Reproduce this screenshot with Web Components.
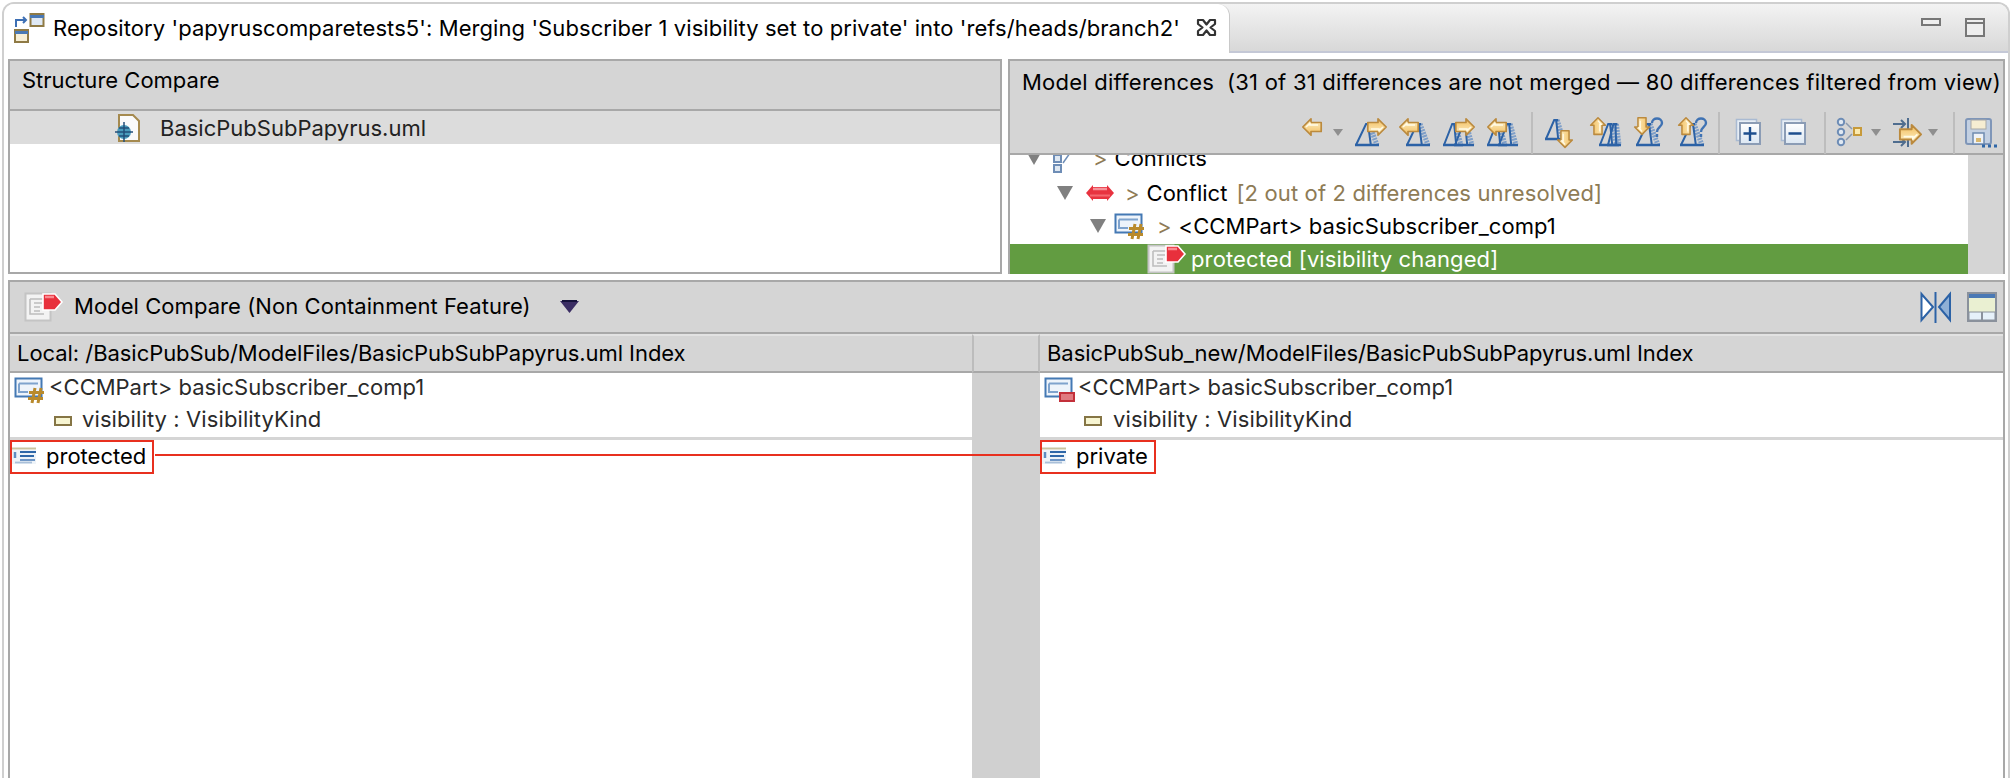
<!DOCTYPE html>
<html>
<head>
<meta charset="utf-8">
<title>Merge</title>
<style>
  html, body { margin: 0; background: #fff; }
  body { font-family: Inter, "Liberation Sans", sans-serif; font-size: 22px; color: #000; overflow: hidden; }
</style>
</head>
<body>
<merge-editor></merge-editor>
<script>
// gold arrow, drawn pointing left in a 20x18 box
const arrow = (x, y, rot = 0, s = 1) => `
  <g transform="translate(${x} ${y}) scale(${s}) rotate(${rot} 10 9)">
    <path d="M.8 9 9 .8V4.500H19.200V13.500H9V17.200Z" fill="url(#gold)" stroke="#bb8a3e" stroke-width="1.700" stroke-linejoin="round"/>
    <path d="M4 9 8 5.500V7H16" fill="none" stroke="#fffbe8" stroke-width="1.400"/>
  </g>`;
const tri = (x, w = 24, top = 6, bottom = 27) => {
  const apex = x + w * 0.46;
  return `
  <path d="M${apex + 3} ${top}L${x + w - 2} ${bottom}" stroke="#7f9fc8" stroke-width="5" stroke-dasharray="2 1" fill="none"/>
  <path d="M${x + 1} ${bottom}L${apex} ${top}H${apex + 4}M${apex + 2} ${top}L${x + w * 0.66} ${bottom}" stroke="#2c62a6" stroke-width="2" fill="none"/>
  <path d="M${x} ${bottom}H${x + w}" stroke="#2c62a6" stroke-width="2.500"/>`;
};
const question = (x, y) => `<path d="M${x} ${y + 5}C${x} ${y - 1} ${x + 10} ${y - 1} ${x + 10} ${y + 5}C${x + 10} ${y + 9} ${x + 5} ${y + 9} ${x + 5} ${y + 14}M${x + 5} ${y + 16}V${y + 19}" fill="none" stroke="#3f72b3" stroke-width="2.400"/>`;
const stackedPage = mark => `
  <rect x="1.500" y="1.500" width="20" height="21" fill="#e6edf5" stroke="#a9bad2" stroke-width="1.500"/>
  <rect x="5" y="5" width="20" height="21" fill="url(#page)" stroke="#8b9cb5" stroke-width="2"/>
  <path d="${mark}" stroke="#1f4f8f" stroke-width="2.400"/>`;
const windowPart = `
  <rect x="1.500" y="1.500" width="26" height="18" fill="#eef4fb" stroke="#4479b4" stroke-width="2"/>
  <path d="M5 6.500H24M5 6.500V15H14" fill="none" stroke="#7fa3cd" stroke-width="2"/>`;
const gridMark = `<path d="M21 11 18 26M27 11 24 26M15 15.500H30M14 21.500H29" stroke="#b98a2c" stroke-width="3"/>`;
const listIcon = `
  <path d="M0 1.500H24" stroke="#c9c3a0" stroke-width="2"/>
  <rect x="0" y="3" width="24" height="14" fill="#eef3f8"/>
  <path d="M3 5V11" stroke="#5f8cc0" stroke-width="2.500"/>
  <path d="M8 5H24M8 9H22" stroke="#2f67a8" stroke-width="1.800"/>
  <path d="M8 13H23" stroke="#5f8cc0" stroke-width="1.800"/>
  <path d="M3 15.500H20" stroke="#a9bfd8" stroke-width="1.800"/>`;
const redPage = `
  <rect x="1.500" y="1.500" width="25" height="27" fill="#f3f3f3" stroke="#c4c4c4" stroke-width="2"/>
  <path d="M6 7H20M6 7V22H20M10 11H18M10 15H16M10 19H16" fill="none" stroke="#bdbdbd" stroke-width="1.600"/>
  <path d="M19 2H31L38 10 31 18H19Z" fill="#e8303c" stroke="#fff" stroke-width="1.600"/>
  <path d="M21 5H30" stroke="#f98a90" stroke-width="2.500"/>`;

const ICONS = {
  back: arrow(1, 0),
  nextTheirs: tri(0) + arrow(12, 0, 180),
  prevTheirs: tri(7) + arrow(0, 0),
  nextBoth: tri(0, 20) + tri(11, 20) + arrow(12, 0, 180),
  prevBoth: tri(0, 20) + tri(11, 20) + arrow(0, 0),
  downLocal: tri(0, 20, 2, 21) + arrow(11, 13, 270, 0.9),
  upLocal: tri(10, 20) + tri(18, 14, 6, 27) + arrow(0, 0, 90, 0.9),
  downAny: tri(3, 24) + question(19, 0) + arrow(0, 0, 270, 0.9),
  upAny: tri(3, 24) + question(19, 0) + arrow(0, 0, 90, 0.9),
  expandAll: stackedPage('M15 9V23M8.500 15.500H21.500'),
  collapseAll: stackedPage('M8.500 15.500H21.500'),
  groups: `
    <g fill="#dfe8f2" stroke="#6e8db6" stroke-width="2"><circle cx="5" cy="4" r="3.200"/><circle cx="5" cy="14" r="3.200"/><circle cx="5" cy="24" r="3.200"/></g>
    <path d="M10 5 16 11M10 22 16 16" stroke="#8a9ab0" stroke-width="1.500"/>
    <rect x="18" y="10" width="7" height="7" fill="#fbeab0" stroke="#c79a3a" stroke-width="2"/>`,
  filters: `
    <path d="M0 6H12M8 2 12 6 8 10M15 0V11M0 24H12M8 20 12 24 8 28M15 18V29" fill="none" stroke="#4f6d8f" stroke-width="2"/>
    ${arrow(6, 6, 180, 1.150)}`,
  save: `
    <rect x="1" y="1" width="25" height="25" rx="2" fill="#c3d0e2" stroke="#7f96b8" stroke-width="2"/>
    <rect x="6" y="2" width="15" height="9" fill="#f6edd2" stroke="#a8a8a8"/>
    <rect x="8" y="15" width="11" height="11" fill="#eef2f7" stroke="#6f8bb0" stroke-width="1.500"/>
    <rect x="11" y="20" width="5" height="4" fill="#d8b870"/>
    <path d="M17 28H32" stroke="#2f67a8" stroke-width="3" stroke-dasharray="3 3"/>`,
  tabIcon: `
    <rect x="16.500" y="1" width="13" height="12" fill="#dfe9f5" stroke="#8f7a45" stroke-width="2"/><path d="M16 3.500H30" stroke="#4a79b5" stroke-width="3"/>
    <rect x="1" y="17" width="13" height="12" fill="#f7efd6" stroke="#8f7a45" stroke-width="2"/><path d="M1 19.500H14" stroke="#4a79b5" stroke-width="3"/>
    <path d="M2 14V7H12M9 4 12 7 9 10" fill="none" stroke="#3d6fb4" stroke-width="2"/>`,
  close: `
    <path d="M2 2H7L10.500 6.500 14 2H19V6L14.500 9.500 19 13V17H14L10.500 12.500 7 17H2V13L6.500 9.500 2 6Z" fill="#fff" stroke="#333" stroke-width="2.200" stroke-linejoin="round"/>`,
  minimize: `<rect x="1" y="1" width="18" height="6" fill="#eee" stroke="#777" stroke-width="2"/>`,
  maximize: `<rect x="1" y="1" width="18" height="17" fill="#eee" stroke="#777" stroke-width="2"/><path d="M1 5H19" stroke="#777" stroke-width="2"/>`,
  umlFile: `
    <path d="M5 1H19L25 7V27H5Z" fill="#fafafa" stroke="#a58a4f" stroke-width="2"/>
    <circle cx="10" cy="18" r="7" fill="#4a9cbd"/>
    <path d="M1 18H19M10 8V28M5 14H15M5 22H15" stroke="#234f7a" stroke-width="1.500"/>`,
  conflictsIcon: `
    <rect x="1" y="1" width="7" height="7" fill="#dfe8f2" stroke="#6e8db6" stroke-width="2"/>
    <rect x="1" y="11" width="7" height="7" fill="#dfe8f2" stroke="#6e8db6" stroke-width="2"/>
    <rect x="1" y="21" width="7" height="7" fill="#dfe8f2" stroke="#6e8db6" stroke-width="2"/>
    <path d="M10 19 17 9" stroke="#6e8db6" stroke-width="1.500"/>
    <rect x="18" y="3" width="6" height="6" fill="#fbeab0" stroke="#c79a3a" stroke-width="2"/>`,
  conflict: `
    <path d="M0 9 7 1V3H21V1L28 9 21 17V15H7V17Z" fill="#e8323f"/>
    <path d="M7 5H21" stroke="#f6939a" stroke-width="2.500"/><path d="M4 11.500H24" stroke="#f4666f" stroke-width="2"/>`,
  partConflict: windowPart + gridMark,
  partRemoved: windowPart + `<rect x="16" y="16" width="14" height="8" fill="#e07a80" stroke="#c3303a" stroke-width="2"/>`,
  attribute: `<rect x="1" y="1" width="16" height="8" fill="#f7f5d2" stroke="#857545" stroke-width="2"/>`,
  listing: listIcon,
  redPage,
  dropdown: `<path d="M0 0H10L5 7Z" fill="#8f8f8f"/>`,
  menuTri: `<path d="M0 0H19L9.500 12Z" fill="#3a2d63"/><path d="M2 0H17" stroke="#15123a" stroke-width="2"/>`,
  splitView: `
    <path d="M1.500 2 13 15 1.500 28Z" fill="#fff" stroke="#2c62a6" stroke-width="2"/>
    <path d="M30 2 19 15 30 28Z" fill="#8fb0d6" stroke="#2c62a6" stroke-width="2"/>
    <path d="M15.500 0V31" stroke="#2c62a6" stroke-width="2"/>`,
  layout: `
    <rect x="1" y="1" width="28" height="28" fill="#eaf0d2" stroke="#8a919c" stroke-width="2"/>
    <rect x="2" y="2" width="26" height="4" fill="#4a79b5"/>
    <rect x="2" y="20" width="26" height="8" fill="#e6f1fa" stroke="#8a919c"/><path d="M15 20V29" stroke="#8a919c" stroke-width="2"/>`
};

class UiIcon extends HTMLElement {
  connectedCallback() {
    const w = this.getAttribute('w') || 32;
    const h = this.getAttribute('h') || 28;
    this.attachShadow({ mode: 'open' });
    this.shadowRoot.innerHTML = `
      <style>:host { display: block; flex: none; width: ${w}px; height: ${h}px; } svg { display: block; overflow: visible; }</style>
      <svg width="${w}" height="${h}" viewBox="0 0 ${w} ${h}" fill="none">
        <defs>
          <linearGradient id="gold" x1="0" y1="0" x2="0" y2="1"><stop offset="0" stop-color="#fff4cf"/><stop offset="1" stop-color="#f2bd5c"/></linearGradient>
          <linearGradient id="page" x1="0" y1="0" x2="0" y2="1"><stop offset="0" stop-color="#ffffff"/><stop offset="1" stop-color="#dce7f3"/></linearGradient>
        </defs>
        ${ICONS[this.getAttribute('name')]}
      </svg>`;
  }
}

class EditorTab extends HTMLElement {
  connectedCallback() {
    this.attachShadow({ mode: 'open' });
    this.shadowRoot.innerHTML = `
      <style>
        :host { display: flex; height: 47px; background: linear-gradient(#f3f3f3, #d8d8d8); border-bottom: 2px solid #c4c8d6; box-sizing: content-box; }
        .tab { display: flex; align-items: center; width: 1226px; height: 49px; box-sizing: border-box; padding: 0 0 2px 10px; background: #fff; border-right: 1px solid #c9c9c9; border-top-right-radius: 12px; white-space: nowrap; }
        .tab span { margin-left: 9px; width: 1143px; letter-spacing: .08px; }
        .controls { margin-left: auto; display: flex; gap: 24px; padding: 14px 23px 0 0; }
      </style>
      <div class="tab">
        <ui-icon name="tabIcon" w="30" h="30"></ui-icon>
        <span><slot></slot></span>
        <ui-icon name="close" w="21" h="19"></ui-icon>
      </div>
      <div class="controls">
        <ui-icon name="minimize" w="20" h="8"></ui-icon>
        <ui-icon name="maximize" w="20" h="19"></ui-icon>
      </div>`;
  }
}

class StructurePane extends HTMLElement {
  connectedCallback() {
    this.attachShadow({ mode: 'open' });
    this.shadowRoot.innerHTML = `
      <style>
        :host { display: flex; flex-direction: column; width: 994px; box-sizing: border-box; border: 2px solid #a8a8a8; background: #fff; }
        .title { height: 42px; background: #d5d5d5; border-bottom: 2px solid #a8a8a8; padding: 6px 0 0 12px; }
        .row { display: flex; align-items: center; height: 33px; background: #dcdcdc; padding-left: 104px; color: #222; }
        .row ui-icon { margin-right: 20px; }
      </style>
      <div class="title"><slot name="title"></slot></div>
      <div class="row"><ui-icon name="umlFile" w="26" h="28"></ui-icon><slot></slot></div>`;
  }
}

class ToolBar extends HTMLElement {
  connectedCallback() {
    const items = [
      ['back', 29], ['drop'], ['nextTheirs'], ['prevTheirs'], ['nextBoth'], ['prevBoth'], ['sep'],
      ['downLocal'], ['upLocal'], ['downAny'], ['upAny'], ['sep', 0, -3],
      ['expandAll', 32, 3], ['collapseAll', 32, 1], ['sep'],
      ['groups', 32, -2], ['drop'], ['filters'], ['drop'], ['sep', 0, 3], ['save', 32, -2]
    ];
    this.attachShadow({ mode: 'open' });
    this.shadowRoot.innerHTML = `
      <style>
        :host { display: flex; align-items: center; gap: 12px; height: 43px; padding-left: 291px; }
        .sep { width: 2px; height: 42px; background: #bdbdbd; }
        .drop { margin-left: -9px; }
      </style>
      ${items.map(([name, w, shift]) => {
        if (name === 'sep') return `<div class="sep" style="margin-left:${shift || 0}px"></div>`;
        if (name === 'drop') return '<ui-icon class="drop" name="dropdown" w="10" h="8"></ui-icon>';
        return `<ui-icon name="${name}" w="${w || 32}" h="30" style="margin-left:${shift || 0}px"></ui-icon>`;
      }).join('')}`;
  }
}

class TreeRow extends HTMLElement {
  connectedCallback() {
    const indent = this.getAttribute('indent');
    const height = this.getAttribute('height');
    const twisty = this.hasAttribute('twisty');
    this.attachShadow({ mode: 'open' });
    this.shadowRoot.innerHTML = `
      <style>
        :host { display: flex; flex: none; align-items: center; height: ${height}px; box-sizing: border-box; padding-left: ${indent}px; white-space: nowrap; }
        :host([selected]) { background: #629c41; color: #fff; align-items: flex-start; line-height: 30px; }
        .twisty { width: 0; height: 0; border: 8px solid transparent; border-top: 14px solid #808080; border-bottom: 0; margin-right: 11px; }
        .mark { color: #8e7b55; padding: 0 7px 0 13px; }
      </style>
      ${twisty ? '<div class="twisty"></div>' : ''}
      <slot name="icon"></slot>
      ${twisty ? '<span class="mark">&gt;</span>' : ''}
      <slot></slot>`;
  }
}

class DifferencesPane extends HTMLElement {
  connectedCallback() {
    this.attachShadow({ mode: 'open' });
    this.shadowRoot.innerHTML = `
      <style>
        :host { display: flex; flex-direction: column; flex: 1; box-sizing: border-box; height: 215px; border-top: 2px solid #a8a8a8; border-left: 2px solid #a8a8a8; border-right: 2px solid #a8a8a8; background: #d5d5d5; }
        .title { padding: 8px 0 0 12px; height: 42px; box-sizing: border-box; white-space: nowrap; letter-spacing: .24px; }
        .bar { border-bottom: 2px solid #a8a8a8; height: 52px; box-sizing: border-box; padding-top: 8px; }
        .tree { flex: 1; display: flex; flex-direction: column; justify-content: flex-end; overflow: hidden; background: #fff; margin-right: 35px; }
      </style>
      <div class="title"><slot name="title"></slot></div>
      <div class="bar"><tool-bar></tool-bar></div>
      <div class="tree"><slot></slot></div>`;
  }
}

class CompareSide extends HTMLElement {
  connectedCallback() {
    this.attachShadow({ mode: 'open' });
    this.shadowRoot.innerHTML = `
      <style>
        :host { display: flex; flex-direction: column; color: #2a2a2a; }
        .head { height: 35px; background: #d5d5d5; border-top: 2px solid #e2e2e2; border-bottom: 2px solid #a8a8a8; padding-left: 7px; line-height: 35px; color: #000; white-space: nowrap; letter-spacing: -.05px; }
        .upper { height: 64px; background: #fff; overflow: hidden; }
        .sash { height: 3px; background: #d5d5d5; }
        .lower { flex: 1; background: #fff; }
      </style>
      <div class="head"><slot name="head"></slot></div>
      <div class="upper"><slot name="upper"></slot></div>
      <div class="sash"></div>
      <div class="lower"><slot></slot></div>`;
  }
}

class DiffMatch extends HTMLElement {
  connectedCallback() {
    this.attachShadow({ mode: 'open' });
    this.shadowRoot.innerHTML = `
      <style>
        :host { display: inline-flex; align-items: center; height: 34px; box-sizing: border-box; border: 2px solid #e8301f; padding: 0 6px 2px 0; color: #000; }
        ui-icon { margin-right: 10px; }
      </style>
      <ui-icon name="listing" w="24" h="18"></ui-icon>
      <slot></slot>`;
  }
}

class ComparePane extends HTMLElement {
  connectedCallback() {
    this.attachShadow({ mode: 'open' });
    this.shadowRoot.innerHTML = `
      <style>
        :host { display: flex; flex-direction: column; flex: 1; position: relative; border: 2px solid #a8a8a8; border-bottom: 0; background: #d5d5d5; min-height: 0; }
        .head { display: flex; align-items: center; height: 50px; flex: none; border-bottom: 2px solid #a8a8a8; padding-left: 14px; }
        .head .name { margin: 0 29px 2px 12px; letter-spacing: .06px; }
        .head .tools { display: flex; gap: 16px; margin-left: auto; margin-right: 6px; }
        .body { display: flex; flex: 1; position: relative; }
        ::slotted([slot="left"]) { width: 962px; }
        .gutter { width: 68px; background: #d0d0d0; }
        .gutter div { height: 35px; background: #d5d5d5; border-top: 2px solid #e2e2e2; border-bottom: 2px solid #a8a8a8; border-left: 2px solid #bcbcbc; border-right: 2px solid #bcbcbc; }
        ::slotted([slot="right"]) { flex: 1; }
        .link { position: absolute; left: 145px; width: 885px; top: 120px; height: 2px; background: #e8301f; }
      </style>
      <div class="head">
        <ui-icon name="redPage" w="38" h="30"></ui-icon>
        <span class="name"><slot name="title"></slot></span>
        <ui-icon name="menuTri" w="19" h="12"></ui-icon>
        <div class="tools">
          <ui-icon name="splitView" w="31" h="31"></ui-icon>
          <ui-icon name="layout" w="30" h="30"></ui-icon>
        </div>
      </div>
      <div class="body">
        <slot name="left"></slot>
        <div class="gutter"><div></div></div>
        <slot name="right"></slot>
        <div class="link"></div>
      </div>`;
  }
}

class MergeEditor extends HTMLElement {
  connectedCallback() {
    this.attachShadow({ mode: 'open' });
    this.shadowRoot.innerHTML = `
      <style>
        :host { display: block; height: 778px; padding: 2px 2px 0; box-sizing: border-box; }
        .frame { display: flex; flex-direction: column; height: 100%; box-sizing: border-box; border: 2px solid #cfcfcf; border-bottom: 0; border-radius: 12px 12px 0 0; overflow: hidden; }
        .content { display: flex; flex-direction: column; flex: 1; gap: 6px; padding: 6px 3px 0 4px; min-height: 0; }
        .top { display: flex; gap: 6px; height: 215px; flex: none; }
        .line { display: flex; align-items: center; height: 28px; padding: 0 0 4px var(--pad); white-space: nowrap; }
        .line ui-icon { margin: 6px var(--gap) 0 0; }
        .line.attr { letter-spacing: .1px; }
        .line.attr ui-icon { margin-top: 4px; }
        .dim { color: #8e7b55; margin-left: 9px; letter-spacing: .14px; }
        .wide { letter-spacing: .13px; }
      </style>
      <div class="frame">
        <editor-tab>Repository 'papyruscomparetests5': Merging 'Subscriber 1 visibility set to private' into 'refs/heads/branch2'</editor-tab>
        <div class="content">
          <div class="top">
            <structure-pane>
              <span slot="title">Structure Compare</span>
              BasicPubSubPapyrus.uml
            </structure-pane>
            <differences-pane>
              <span slot="title">Model differences&nbsp; (31 of 31 differences are not merged — 80 differences filtered from view)</span>
              <tree-row indent="16" height="34" twisty><ui-icon slot="icon" name="conflictsIcon" w="26" h="28" style="margin-right:1px"></ui-icon>Conflicts</tree-row>
              <tree-row indent="47" height="35" twisty><ui-icon slot="icon" name="conflict" w="28" h="18" style="margin:0 -2px 0 2px"></ui-icon>Conflict<span class="dim">[2 out of 2 differences unresolved]</span></tree-row>
              <tree-row indent="80" height="34" twisty style="padding-bottom:2px"><ui-icon slot="icon" name="partConflict" w="30" h="26" style="margin-left:-3px"></ui-icon><span class="wide" style="letter-spacing:.07px">&lt;CCMPart&gt; basicSubscriber_comp1</span></tree-row>
              <tree-row indent="137" height="30" selected><ui-icon slot="icon" name="redPage" w="38" h="30" style="margin-right:6px"></ui-icon><span class="wide">protected [visibility changed]</span></tree-row>
            </differences-pane>
          </div>
          <compare-pane>
            <span slot="title">Model Compare (Non Containment Feature)</span>
            <compare-side slot="left">
              <span slot="head">Local: /BasicPubSub/ModelFiles/BasicPubSubPapyrus.uml Index</span>
              <div slot="upper" class="line" style="--pad:4px;--gap:5px"><ui-icon name="partConflict" w="30" h="26"></ui-icon>&lt;CCMPart&gt; basicSubscriber_comp1</div>
              <div slot="upper" class="line attr" style="--pad:44px;--gap:10px"><ui-icon name="attribute" w="18" h="10"></ui-icon>visibility : VisibilityKind</div>
              <diff-match>protected</diff-match>
            </compare-side>
            <compare-side slot="right">
              <span slot="head">BasicPubSub_new/ModelFiles/BasicPubSubPapyrus.uml Index</span>
              <div slot="upper" class="line" style="--pad:4px;--gap:4px"><ui-icon name="partRemoved" w="30" h="26"></ui-icon>&lt;CCMPart&gt; basicSubscriber_comp1</div>
              <div slot="upper" class="line attr" style="--pad:44px;--gap:11px"><ui-icon name="attribute" w="18" h="10"></ui-icon>visibility : VisibilityKind</div>
              <diff-match>private</diff-match>
            </compare-side>
          </compare-pane>
        </div>
      </div>`;
  }
}

customElements.define('ui-icon', UiIcon);
customElements.define('editor-tab', EditorTab);
customElements.define('structure-pane', StructurePane);
customElements.define('tool-bar', ToolBar);
customElements.define('tree-row', TreeRow);
customElements.define('differences-pane', DifferencesPane);
customElements.define('compare-side', CompareSide);
customElements.define('diff-match', DiffMatch);
customElements.define('compare-pane', ComparePane);
customElements.define('merge-editor', MergeEditor);
</script>
</body>
</html>
